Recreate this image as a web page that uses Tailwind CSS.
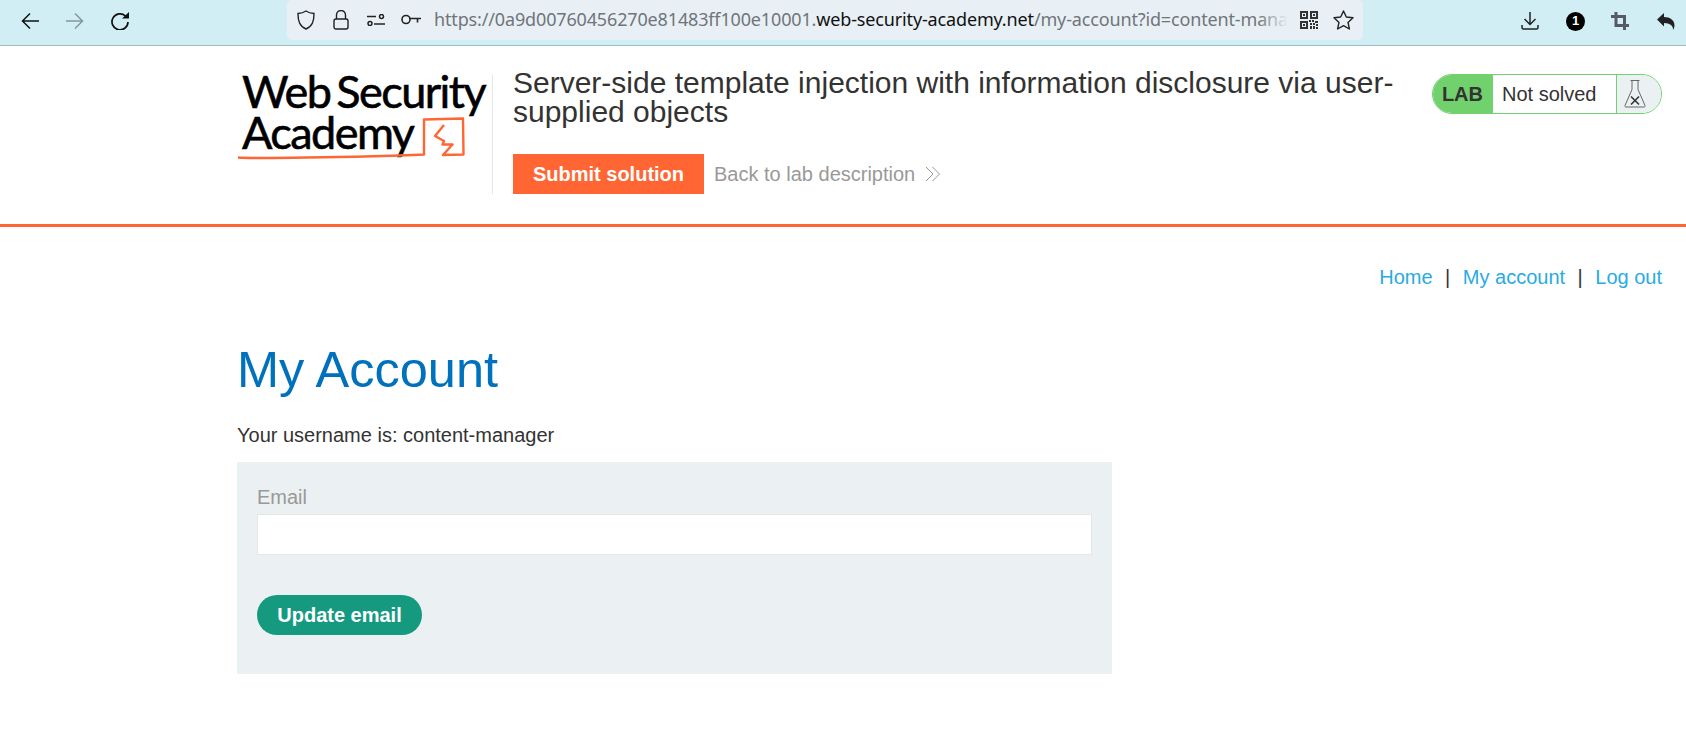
<!doctype html>
<html>
<head>
<meta charset="utf-8">
<script src="https://cdn.jsdelivr.net/npm/@tailwindcss/browser@4"></script>
</head>
<body class="bg-white h-[751px] overflow-hidden font-['Liberation_Sans',Arial,sans-serif] text-[#333332]">
<!-- browser toolbar -->
<div class="h-[46px] bg-[#d0eef3] border-b border-[#a3bdc2] flex items-center">
  <div class="flex items-center w-[287px] h-full pl-[21px] gap-[27px] pb-[3px] shrink-0">
    <svg class="w-[18px] h-[18px]" viewBox="0 0 18 18" fill="none" stroke="#111" stroke-width="1.500"><path d="M18 9H1.500M9 1.500L1.500 9 9 16.500"/></svg>
    <svg class="w-[18px] h-[18px]" viewBox="0 0 18 18" fill="none" stroke="#87989c" stroke-width="1.500"><path d="M0 9h16.500M9 1.500L16.500 9 9 16.500"/></svg>
    <svg class="w-[18px] h-[18px]" viewBox="0 0 18 18" fill="none" stroke="#111" stroke-width="1.700"><path d="M14.500 4A8 8 0 1 0 17 10"/><path d="M11 6.500h7V0z" fill="#111" stroke="none"/></svg>
  </div>
  <div class="h-[40px] w-[1076px] bg-[#e8f0f5] rounded-[5px] flex items-center pl-[10px] -mt-[6px] shrink-0">
    <svg class="w-[18px] h-[20px] shrink-0" viewBox="0 0 18 20" fill="none" stroke="#222" stroke-width="1.400"><path d="M9 1c2.500 1.700 5 2.300 8 2.500 0 7.500-1.500 12.500-8 15.500C2.500 16 1 11 1 3.500 4 3.300 6.500 2.700 9 1z"/></svg>
    <svg class="w-[16px] h-[20px] shrink-0 ml-[18px]" viewBox="0 0 16 20" fill="none" stroke="#222" stroke-width="1.400"><rect x="1" y="9" width="14" height="10" rx="2"/><path d="M3.500 9V5a4.500 4.500 0 0 1 9 0v4"/></svg>
    <svg class="w-[18px] h-[12px] shrink-0 ml-[18px]" viewBox="0 0 18 12" fill="none" stroke="#222" stroke-width="1.500"><path d="M0 2.500h9M7 10h11"/><circle cx="14.500" cy="2.500" r="2"/><circle cx="3" cy="9.500" r="2"/></svg>
    <svg class="w-[20px] h-[11px] shrink-0 ml-[16px]" viewBox="0 0 20 11" fill="none" stroke="#222" stroke-width="1.600"><circle cx="5" cy="5.500" r="4"/><path d="M9 4.500h11M16.500 4.500v4"/></svg>
    <div class="ml-[13px] w-[854px] overflow-hidden whitespace-nowrap text-[18px] font-['Noto_Sans',sans-serif] tracking-[-0.15px] text-[#70757a] shrink-0 relative">https://0a9d00760456270e81483ff100e10001.<span class="text-[#111]">web-security-academy.net</span>/my-account?id=content-mana<div class="absolute right-0 top-0 bottom-0 w-[30px] bg-gradient-to-r from-transparent to-[#e8f0f5]"></div></div>
    <svg class="w-[18px] h-[18px] shrink-0 ml-[12px]" viewBox="0 0 18 18" fill="#333"><path d="M0 0h8v8H0zM2 2v4h4V2zM10 0h8v8h-8zM12 2v4h4V2zM0 10h8v8H0zM2 12v4h4v-4zM3 3h2v2H3zM13 3h2v2h-2zM3 13h2v2H3zM9 9h2v2H9zM12 9h2v2h-2zM15 10h3v2h-3zM10 12h2v2h-2zM13 12h2v2h-2zM10 15h2v3h-2zM13 15h2v3h-2zM16 13h2v2h-2zM16 16h2v2h-2z"/></svg>
    <svg class="w-[21px] h-[20px] shrink-0 ml-[15px]" viewBox="0 0 21 20" fill="none" stroke="#222" stroke-width="1.400" stroke-linejoin="round"><path d="M10.500 1l2.800 6 6.700.8-5 4.600 1.400 6.600-5.900-3.300L4.600 19 6 12.400 1 7.800 7.700 7z"/></svg>
  </div>
  <div class="flex-1 flex items-center h-full pl-[158px] pb-[3px]">
    <svg class="w-[18px] h-[18px] shrink-0" viewBox="0 0 18 18" fill="none" stroke="#222" stroke-width="1.500"><path d="M9 0v12M3.500 7L9 12.500 14.500 7M1 13v2.500q0 1.500 1.500 1.500h13q1.500 0 1.500-1.500V13"/></svg>
    <div class="ml-[27px] w-[19px] h-[19px] rounded-full bg-black text-white text-[13px] font-bold flex items-center justify-center shrink-0">1</div>
    <svg class="w-[18px] h-[18px] ml-[26px] shrink-0" viewBox="0 0 18 18" fill="none" stroke="#555a66" stroke-width="3"><path d="M5 0v13.500h13M0 4.500h13.500V18"/></svg>
    <svg class="w-[18px] h-[17px] ml-[28px] shrink-0" viewBox="0 0 18 17" fill="#222"><path d="M0 6.500L7 0v4c6 0 10.500 3 10.500 8.500 0 1.500-.5 3-1.500 4.500.5-4-3-7-9-7v3.500z"/></svg>
  </div>
</div>
<!-- lab header -->
<div class="h-[181px] border-b-[3px] border-[#ff6633] flex pl-[237px] pr-[24px]">
  <div class="w-[256px] h-[120px] mt-[28px] border-r border-[#e6e6e6] relative shrink-0">
    <div class="font-['Lato',sans-serif] text-[45px] leading-[41px] text-black tracking-[-1.550px] [word-spacing:-4px] [-webkit-text-stroke:0.6px_black] pl-[5px] -mt-[3px] whitespace-nowrap">Web Security<br>Academy</div>
    <svg class="absolute left-0 top-0 w-[232px] h-[90px]" viewBox="237 74 232 90" fill="none" stroke="#ff6633" stroke-width="2.400" stroke-linejoin="round"><path d="M238 157.500c20 1.500 60 0 100-.5s60-1.500 86-2.500V119.500l39-1 .5 36-20.500.5 9.500-10.500H442.500l1.500-3.500-9-5 9-11"/></svg>
  </div>
  <div class="pl-[20px] flex-1 flex flex-col">
    <div class="flex justify-between">
      <h2 class="w-[890px] text-[30px] leading-[29px] mt-[22px] text-[#333332]">Server-side template injection with information disclosure via user-supplied objects</h2>
      <div class="mt-[28px] h-[40px] w-[230px] flex rounded-[20px] border border-[#70d16d] overflow-hidden text-[20px] shrink-0">
        <div class="w-[60px] bg-[#70d16d] font-bold flex items-center justify-end pr-[10px]">LAB</div>
        <div class="flex-1 bg-white flex items-center pl-[9px]">Not solved</div>
        <div class="w-[45px] bg-[#ebf0f2] border-l border-[#70d16d] flex items-center pl-[7px]">
          <svg class="w-[22px] h-[30px]" viewBox="0 0 22 30" fill="none" stroke="#666" stroke-width="1"><path d="M6.500 1.500h9M8 1.500v9L1 26.500c-.4 1 .2 1.500 1 1.500h18c.8 0 1.400-.5 1-1.500L14 10.500v-9"/><path d="M7 17.500l8 8M15 17.500l-8 8" stroke="#333" stroke-width="1.600"/></svg>
        </div>
      </div>
    </div>
    <div class="flex items-center mt-[28px]">
      <div class="w-[191px] h-[40px] bg-[#ff6633] text-white font-bold text-[20px] flex items-center justify-center pb-[1px]">Submit solution</div>
      <div class="ml-[10px] text-[20px] text-[#999999] pb-[1px]">Back to lab description</div>
      <svg class="ml-[10px] w-[16px] h-[16px]" viewBox="0 0 16 16" fill="none" stroke="#999" stroke-width="1"><path d="M1 1l7 7-7 7M7.500 1l7 7-7 7"/></svg>
    </div>
  </div>
</div>
<!-- nav -->
<div class="flex justify-end pr-[24px] mt-[38px] text-[20px] leading-[24px]">
  <span class="text-[#29abe2]">Home</span><span class="mx-[12.500px]">|</span><span class="text-[#29abe2]">My account</span><span class="mx-[12.500px]">|</span><span class="text-[#29abe2]">Log out</span>
</div>
<!-- content -->
<div class="pl-[237px]">
  <h1 class="text-[50.500px] leading-[60px] text-[#0071bc] mt-[51px]">My Account</h1>
  <p class="text-[20px] leading-[24px] mt-[23px]">Your username is: content-manager</p>
  <div class="w-[875px] h-[212px] bg-[#ebf0f2] mt-[15px] pt-[23px] px-[20px]">
    <div class="text-[20px] leading-[24px] text-[#999999]">Email</div>
    <div class="h-[41px] mt-[5px] bg-white border border-[#e6e6e6]"></div>
    <div class="mt-[40px] w-[165px] h-[40px] rounded-[20px] bg-[#159a7f] text-white font-bold text-[20px] flex items-center justify-center">Update email</div>
  </div>
</div>
</body>
</html>
